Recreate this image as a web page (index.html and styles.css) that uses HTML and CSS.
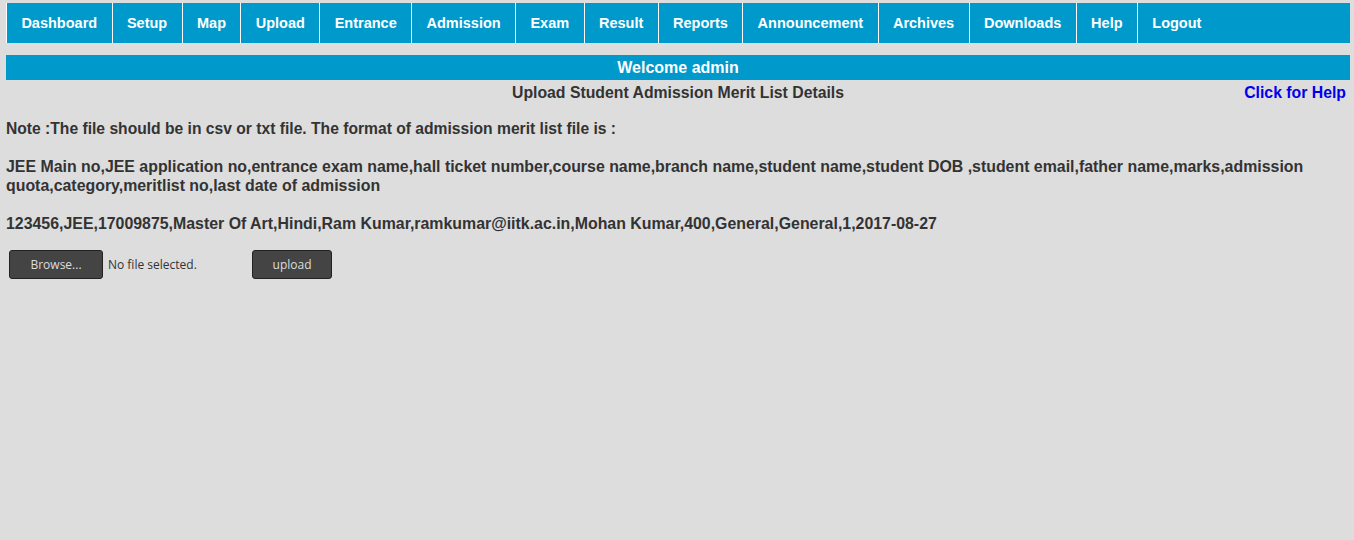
FILE: index.html
```html
<!DOCTYPE html>
<html>
<head>
<meta charset="utf-8">
<link rel="stylesheet" href="styles.css">
</head>
<body>
<ul class="nav">
  <li>Dashboard</li>
  <li>Setup</li>
  <li>Map</li>
  <li>Upload</li>
  <li>Entrance</li>
  <li>Admission</li>
  <li>Exam</li>
  <li>Result</li>
  <li>Reports</li>
  <li>Announcement</li>
  <li>Archives</li>
  <li>Downloads</li>
  <li>Help</li>
  <li>Logout</li>
</ul>
<div class="welcome">Welcome admin</div>
<div class="titlerow">
  <div class="title">Upload Student Admission Merit List Details</div>
  <a class="help" href="#">Click for Help</a>
</div>
<div class="note">
  <p class="first">Note :The file should be in csv or txt file. The format of admission merit list file is :</p>
  <p>JEE Main no,JEE application no,entrance exam name,hall ticket number,course name,branch name,student name,student DOB ,student email,father name,marks,admission quota,category,meritlist no,last date of admission</p>
  <p>123456,JEE,17009875,Master Of Art,Hindi,Ram Kumar,ramkumar@iitk.ac.in,Mohan Kumar,400,General,General,1,2017-08-27</p>
</div>
<div class="form">
  <span class="btn browse">Browse...</span>
  <span class="nofile">No file selected.</span>
  <span class="btn upload">upload</span>
</div>
</body>
</html>
```
FILE: styles.css
```css
html, body {
  background: #dddddd;
}
body {
  margin: 3px 4px 0 6px;
  font-family: "Liberation Sans", Arial, sans-serif;
  color: #333333;
}
.nav {
  list-style: none;
  margin: 0;
  padding: 0;
  display: flex;
  height: 40px;
  background: #0099cc;
}
.nav li {
  border-left: 1px solid #ffffff;
  padding: 0 14.4px 1px;
  display: flex;
  align-items: center;
  color: #ffffff;
  font-weight: bold;
  font-size: 14.5px;
}
.welcome {
  margin-top: 12px;
  height: 25px;
  background: #0099cc;
  color: #ffffff;
  font-weight: bold;
  font-size: 16px;
  line-height: 25px;
  text-align: center;
}
.titlerow {
  position: relative;
  height: 24px;
  padding-top: 1px;
  line-height: 24px;
  font-size: 15.8px;
  font-weight: bold;
}
.title {
  text-align: center;
}
.help {
  position: absolute;
  right: 4px;
  top: 1px;
  color: #0000ee;
  text-decoration: none;
}
.note {
  font-size: 15.9px;
  font-weight: bold;
  line-height: 19px;
  margin-top: 14px;
}
.note p {
  margin: 0 0 19px 0;
}
.note .first {
  font-size: 15.65px;
}
.form {
  display: flex;
  align-items: center;
  margin-top: -2px;
  padding-left: 3px;
  font-family: "Open Sans", "Noto Sans", sans-serif;
  font-size: 12px;
}
.btn {
  box-sizing: border-box;
  height: 29px;
  display: flex;
  align-items: center;
  justify-content: center;
  background: #444444;
  border: 1px solid #222222;
  border-radius: 3px;
  color: #dddddd;
}
.browse {
  width: 94px;
}
.nofile {
  margin-left: 5px;
  width: 144px;
  color: #333;
}
.upload {
  width: 80px;
}
```
